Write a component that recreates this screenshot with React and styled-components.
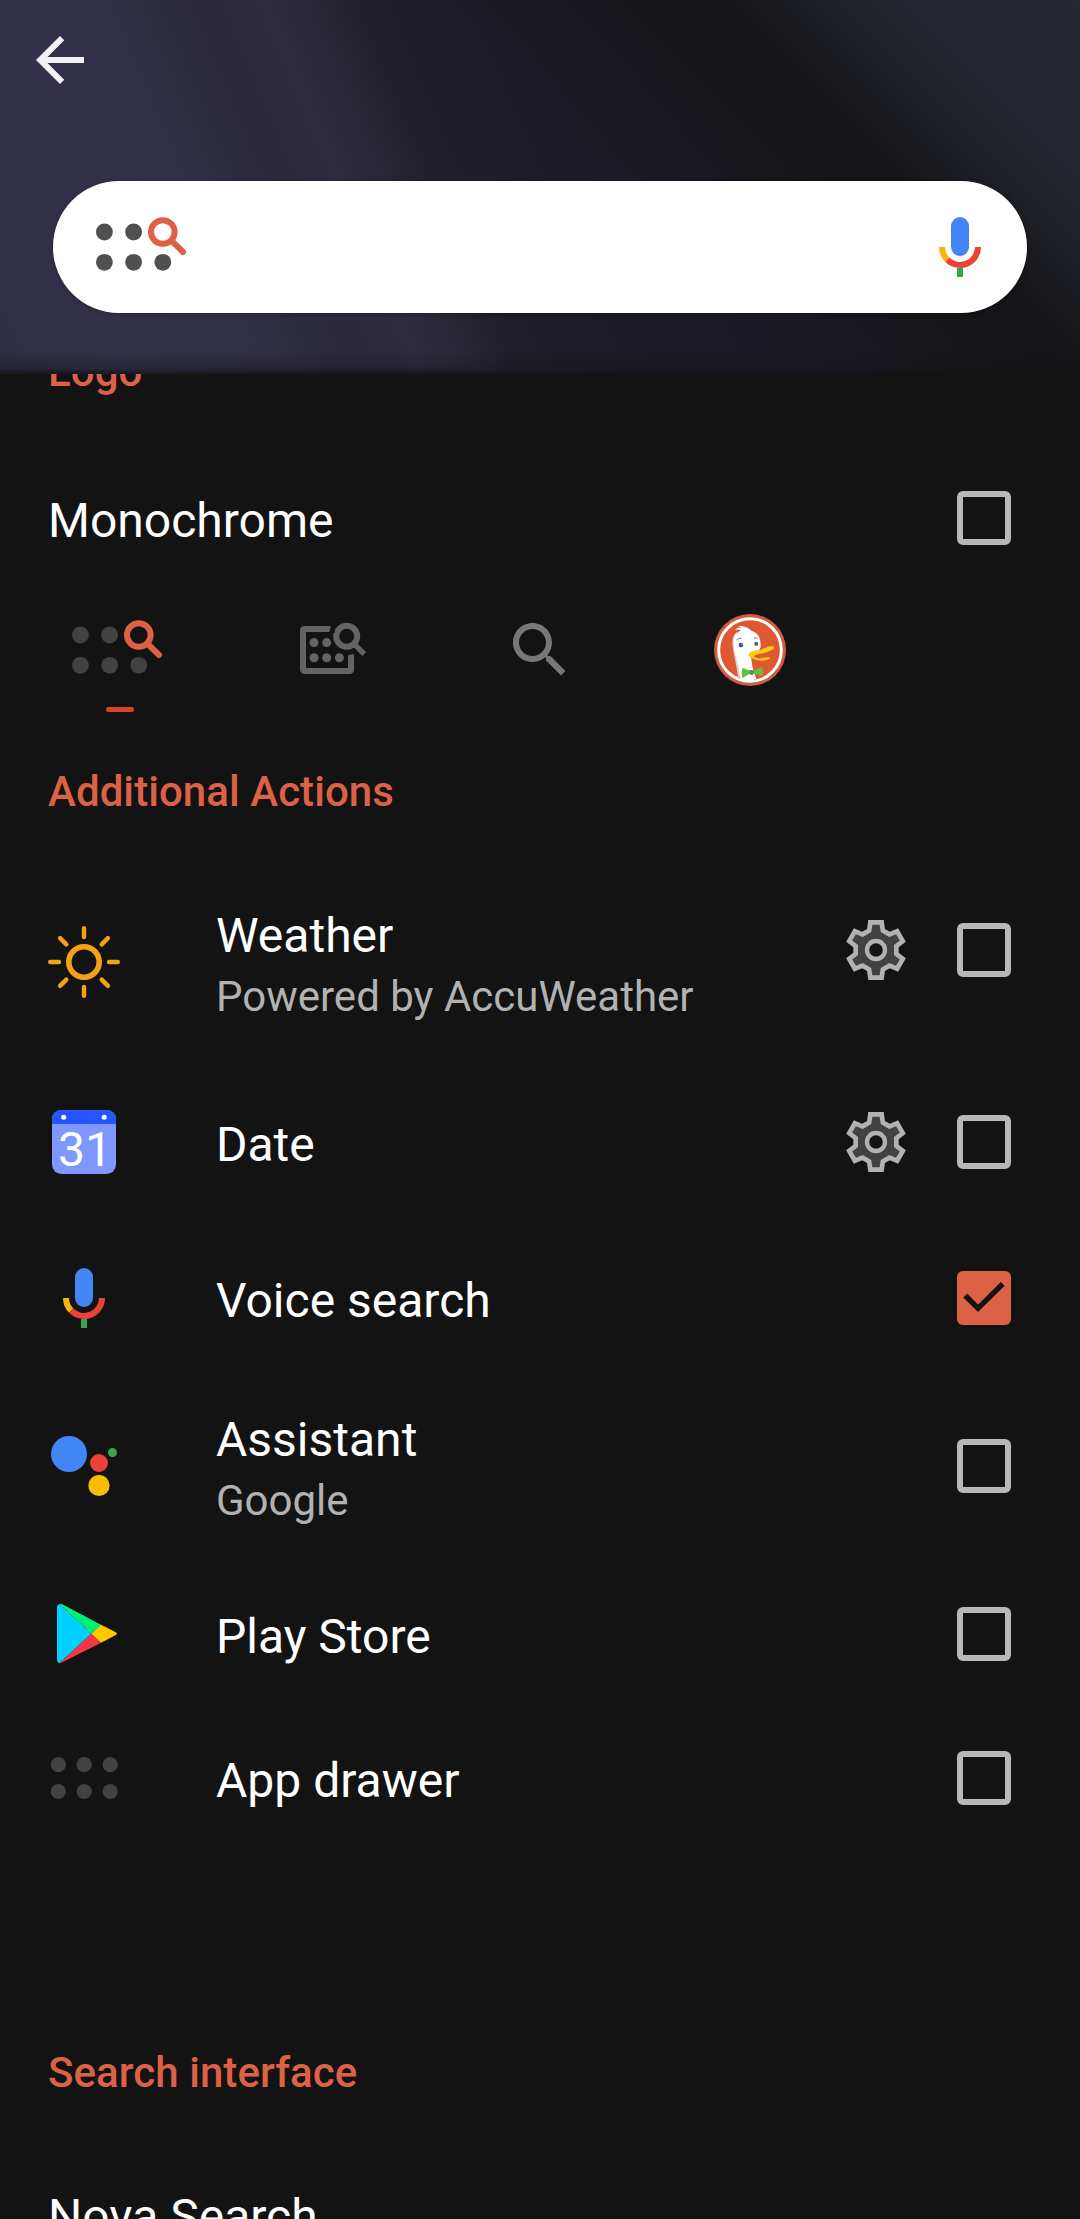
import React, { useState } from "react";
import styled, { createGlobalStyle } from "styled-components";

const GlobalStyle = createGlobalStyle`
  * {
    box-sizing: border-box;
  }

  body {
    margin: 0;
    background: #131313;
    font-family: Roboto, "Noto Sans", sans-serif;
  }
`;

const Screen = styled.div`
  display: flex;
  flex-direction: column;
  width: 1080px;
  height: 2219px;
  overflow: hidden;
  background: #131313;
`;

const Header = styled.header`
  flex: none;
  height: 374px;
  padding: 24px 53px 0;
  background: linear-gradient(
      to bottom,
      rgba(16, 16, 20, 0) 350px,
      rgba(16, 16, 20, 0.3) 368px,
      rgba(16, 16, 20, 0.75) 374px
    ),
    linear-gradient(
      45deg,
      rgba(20, 19, 22, 0) 580px,
      rgba(20, 19, 22, 0.9) 745px,
      #151518 775px,
      #1f2128 850px,
      #232630 920px,
      #242730 1028px
    ),
    linear-gradient(
      67deg,
      #2e2f46 0px,
      #333149 120px,
      #312f46 260px,
      #2c2a3d 305px,
      #2b293b 340px,
      #2e2c3e 390px,
      #292736 428px,
      #201e29 480px,
      #1d1b26 600px,
      #1a1922 800px,
      #17161b 1140px
    );
`;

const BackButton = styled.button`
  display: block;
  width: 72px;
  height: 72px;
  margin-left: -29px;
  padding: 0;
  border: 0;
  background: none;
`;

const SearchBar = styled.div`
  display: flex;
  align-items: center;
  justify-content: space-between;
  height: 132px;
  margin-top: 85px;
  padding: 0 31px 0 43px;
  border-radius: 66px;
  background: #fff;
  box-shadow: 0 1px 5px rgba(0, 0, 0, 0.3);
`;

const List = styled.main`
  flex: 1;
  min-height: 0;
  overflow: hidden;
`;

const Heading = styled.h2`
  height: 112px;
  margin: ${({ $offset }) => $offset || 0}px 0 0;
  padding: 37px 48px 0;
  color: #dd6245;
  font-size: 42px;
  font-weight: 500;
  line-height: 50px;
  letter-spacing: 0.06px;
`;

const Row = styled.div`
  display: flex;
  align-items: center;
  height: ${({ $height }) => $height}px;
  padding: ${({ $top }) => $top || 0}px 60px 0 48px;
`;

const RowMain = styled.div`
  display: flex;
  flex: 1;
  align-items: center;
  padding-top: ${({ $top }) => $top || 0}px;
`;

const IconFrame = styled.div`
  width: 168px;
  height: 72px;
`;

const Labels = styled.div`
  display: flex;
  flex-direction: column;
  gap: 8px;
  padding-top: 6px;
`;

const Title = styled.span`
  color: #fff;
  font-size: 48px;
  line-height: 56px;
  white-space: nowrap;
`;

const Summary = styled.span`
  color: #b2b2b2;
  font-size: 42px;
  line-height: 50px;
  white-space: nowrap;
`;

const Widgets = styled.div`
  display: flex;
  align-items: center;
  gap: 45px;
  padding-right: 9px;
`;

const Box = styled.button`
  display: block;
  width: 54px;
  height: 54px;
  padding: 0;
  border: ${({ $checked }) => ($checked ? "0" : "6px solid #b8b8b8")};
  border-radius: 6px;
  background: ${({ $checked }) => ($checked ? "#dd6245" : "transparent")};
`;

const Picker = styled.div`
  display: grid;
  grid-template-columns: repeat(4, 210px);
  height: 140px;
  padding: 24px 15px 0;
`;

const PickerItem = styled.div`
  display: flex;
  flex-direction: column;
  align-items: center;
  gap: 21px;
`;

const Indicator = styled.div`
  width: 28px;
  height: 5px;
  border-radius: 3px;
  background: #d64727;
`;

const Spacer = styled.div`
  height: 161px;
`;

const Svg = styled.svg`
  display: block;
  flex: none;
`;

const Icon = ({ width = 72, children }) => (
  <Svg width={width} height="72" viewBox={`0 0 ${width} 72`}>
    {children}
  </Svg>
);

const BackIcon = () => (
  <Icon>
    <path
      transform="scale(3)"
      fill="#f1f1f3"
      d="M20 11H7.83l5.59-5.59L12 4l-8 8 8 8 1.41-1.41L7.83 13H20v-2z"
    />
  </Icon>
);

const DotsSearchIcon = ({ color }) => (
  <Icon width={96}>
    <g fill={color}>
      <circle cx="8.4" cy="21" r="8.4" />
      <circle cx="37.6" cy="21" r="8.4" />
      <circle cx="8.4" cy="51.3" r="8.4" />
      <circle cx="37.6" cy="51.3" r="8.4" />
      <circle cx="66.8" cy="51.3" r="8.4" />
    </g>
    <g fill="none" stroke="#dd6245" strokeWidth="6">
      <circle cx="66.8" cy="21" r="11.8" />
      <path d="M75.5 29.7 87 41" strokeLinecap="round" />
    </g>
  </Icon>
);

const DrawerSearchIcon = () => (
  <Icon>
    <g fill="none" stroke="#646464" strokeWidth="6">
      <path d="M36.5 15H11q-2 0-2 2v38q0 2 2 2h44q2 0 2-2V39" />
      <circle cx="52.7" cy="22.3" r="10.5" />
      <path d="m60 29.8 10.3 10.2" strokeWidth="5.4" />
    </g>
    <path d="m37.8 11-3 8h6v-8z" fill="#131313" />
    <path d="m53.5 38.7 7-2v3l-7 1.8z" fill="#131313" />
    <g fill="#646464">
      <circle cx="20" cy="28.6" r="4.5" />
      <circle cx="32.7" cy="28.6" r="4.5" />
      <circle cx="20" cy="43.7" r="4.5" />
      <circle cx="32.7" cy="43.7" r="4.5" />
      <circle cx="45.4" cy="43.7" r="4.5" />
    </g>
  </Icon>
);

const SearchIcon = () => (
  <Icon>
    <path
      transform="scale(3)"
      fill="#777"
      d="M15.5 14h-.79l-.28-.27C15.41 12.59 16 11.11 16 9.5 16 5.91 13.09 3 9.5 3S3 5.91 3 9.5 5.91 16 9.5 16c1.61 0 3.09-.59 4.23-1.57l.27.28v.79l5 4.99L20.49 19l-4.99-5zm-6 0C7.01 14 5 11.99 5 9.5S7.01 5 9.5 5 14 7.01 14 9.5 11.99 14 9.5 14z"
    />
  </Icon>
);

const DuckIcon = () => (
  <Icon>
    <g transform="translate(-224 -24) scale(0.33333)">
      <circle cx="780" cy="180" r="108" fill="#cf5d42" />
      <circle cx="780" cy="180" r="94" fill="#de5833" stroke="#fff" strokeWidth="9" />
      <path
        fill="#d9cfcb"
        d="M744 266C740 215 727 188 727 156c0-14 5-24 14-30l20 142z"
      />
      <path
        fill="#fff"
        d="M752 271C747 222 731 190 731 156c0-20 9-30 22-34-6-4-13-4-19-2 6-8 14-8 21-6-4-4-9-6-14-6 18-1 34 3 44 15 18 4 27 20 27 42 0 12-5 17-14 19-16 5-21 12-14 22 1 22 8 42 15 60-16 7-34 8-47 5z"
      />
      <path
        fill="#ffcc14"
        d="M776 194c1-12 22-13 37-15 11-3 22-11 34-11 8 1 6 8-1 12-14 7-31 11-43 13-15 3-13 10 0 12 13 1 21-4 32-3 7 1 7 2 0 6-13 7-38 5-48-3-7-4-11-7-11-11z"
      />
      <path
        fill="#67bd47"
        d="m758 233 21 9h12l25-12c3 8 3 19 1 28l-25-7-8 5-6-4-21 12c-3-9-2-22 1-31z"
      />
      <path fill="#4aa239" d="M779 240h12v12l-7 3-6-4z" />
      <circle cx="753" cy="165" r="7" fill="#2d4f8e" />
      <circle cx="799" cy="161" r="6" fill="#2d4f8e" />
      <circle cx="756" cy="163" r="2" fill="#fff" />
      <circle cx="801" cy="159" r="1.8" fill="#fff" />
      <path
        fill="none"
        stroke="#6278a8"
        strokeWidth="3"
        d="M740 150q6-7 14-5M792 145q6-4 11 0"
      />
    </g>
  </Icon>
);

const SunIcon = () => (
  <Icon>
    <g fill="none" stroke="#f5a114">
      <circle cx="36" cy="36" r="15.2" strokeWidth="5.6" />
      {[0, 45, 90, 135, 180, 225, 270, 315].map((angle) => (
        <path
          key={angle}
          transform={`rotate(${angle} 36 36)`}
          d="M36 2.2v8.8"
          strokeWidth="4.4"
          strokeLinecap="round"
        />
      ))}
    </g>
  </Icon>
);

const CalendarIcon = () => (
  <Icon>
    <rect x="4" y="4" width="64" height="64" rx="9.5" fill="#7f98ff" />
    <path d="M4 18v-4.5Q4 4 13.5 4h45Q68 4 68 13.5V18z" fill="#2655ff" />
    <circle cx="15.7" cy="11.3" r="2.5" fill="#fff" />
    <circle cx="56.2" cy="11.3" r="2.5" fill="#fff" />
    <text
      x="37"
      y="60.2"
      textAnchor="middle"
      fontFamily="Roboto, sans-serif"
      fontSize="48"
      fill="#fff"
    >
      31
    </text>
  </Icon>
);

const MicIcon = () => (
  <Icon>
    <rect x="27" y="6" width="18" height="39" rx="9" fill="#4285f4" />
    <g fill="none" strokeWidth="6">
      <path d="M18 36a18 18 0 0 0 5.27 12.73" stroke="#f8b60a" />
      <path d="M23.27 48.73A18 18 0 0 0 54 36" stroke="#ea4335" />
    </g>
    <path d="M33 57h6v9h-6z" fill="#34a853" />
  </Icon>
);

const AssistantIcon = () => (
  <Icon>
    <circle cx="21" cy="24" r="18" fill="#4285f4" />
    <circle cx="51" cy="33" r="9" fill="#ea4335" />
    <circle cx="64.5" cy="22.5" r="4.5" fill="#34a853" />
    <circle cx="51" cy="55.5" r="10.6" fill="#fbbc05" />
  </Icon>
);

const PlayIcon = () => (
  <Icon>
    <g transform="translate(-18 -28) scale(0.33333)">
      <path fill="#00d0ff" d="M88 102q-7 3-7 10v157q0 8 7 11l96-89z" />
      <path fill="#00f076" d="M88 102q5-1 9 1l116 61-29 27z" />
      <path fill="#f93647" d="m88 280 96-89 29 27L97 277q-5 3-9 3z" />
      <path fill="#ffc900" d="m213 164 43 22q9 5 0 10l-43 22-29-27z" />
    </g>
  </Icon>
);

const DrawerIcon = () => (
  <Icon>
    <g fill="#424242">
      {[10.3, 36.2, 62.2].map((x) => (
        <React.Fragment key={x}>
          <circle cx={x} cy="22.7" r="7.6" />
          <circle cx={x} cy="49.5" r="7.6" />
        </React.Fragment>
      ))}
    </g>
  </Icon>
);

// one tooth, repeated every 60 degrees
const tooth = [
  [-20.6, -58.6],
  [-17, -83],
  [17, -83],
  [20.6, -58.6],
];
const gearPoints = [0, 1, 2, 3, 4, 5]
  .flatMap((i) => {
    const a = (i * Math.PI) / 3;
    return tooth.map(([x, y]) => [
      (x * Math.cos(a) - y * Math.sin(a)).toFixed(1),
      (x * Math.sin(a) + y * Math.cos(a)).toFixed(1),
    ]);
  })
  .join(" ");

const GearIcon = () => (
  <Icon>
    <g transform="translate(36 36) scale(0.33333)" stroke="#b2b2b2">
      <polygon points={gearPoints} fill="#424242" strokeWidth="14" />
      <circle r="27" fill="#131313" strokeWidth="13" />
    </g>
  </Icon>
);

const Checkbox = ({ checked, onClick }) => (
  <Box type="button" $checked={checked} onClick={onClick}>
    {checked && (
      <Svg width="54" height="54" viewBox="0 0 54 54">
        <path
          d="M8.2 24.5 21 37.3 45.8 12.8"
          fill="none"
          stroke="#131313"
          strokeWidth="5.4"
        />
      </Svg>
    )}
  </Box>
);

const actions = [
  { id: "weather", title: "Weather", summary: "Powered by AccuWeather", icon: <SunIcon />, height: 216, top: 24, settings: true },
  { id: "date", title: "Date", icon: <CalendarIcon />, height: 168, settings: true },
  { id: "voice", title: "Voice search", icon: <MicIcon />, height: 144 },
  { id: "assistant", title: "Assistant", summary: "Google", icon: <AssistantIcon />, height: 192 },
  { id: "play", title: "Play Store", icon: <PlayIcon />, height: 144 },
  { id: "drawer", title: "App drawer", icon: <DrawerIcon />, height: 144 },
];

const logos = [
  { id: "dots", icon: <DotsSearchIcon color="#424242" /> },
  { id: "drawer", icon: <DrawerSearchIcon /> },
  { id: "search", icon: <SearchIcon /> },
  { id: "duck", icon: <DuckIcon /> },
];

const App = () => {
  const [logo, setLogo] = useState("dots");
  const [checked, setChecked] = useState({ voice: true });

  const toggle = (id) => {
    setChecked({ ...checked, [id]: !checked[id] });
  };

  return (
    <>
      <GlobalStyle />
      <Screen>
        <Header>
          <BackButton type="button">
            <BackIcon />
          </BackButton>
          <SearchBar>
            <DotsSearchIcon color="#505050" />
            <MicIcon />
          </SearchBar>
        </Header>
        <List>
          {/* scrolled partly under the header */}
          <Heading $offset={-64}>Logo</Heading>
          <Row $height={168} $top={24}>
            <RowMain>
              <Labels>
                <Title>Monochrome</Title>
              </Labels>
            </RowMain>
            <Widgets>
              <Checkbox checked={checked.mono} onClick={() => toggle("mono")} />
            </Widgets>
          </Row>
          <Picker>
            {logos.map((item) => (
              <PickerItem key={item.id} onClick={() => setLogo(item.id)}>
                {item.icon}
                {logo === item.id && <Indicator />}
              </PickerItem>
            ))}
          </Picker>

          <Heading>Additional Actions</Heading>
          {actions.map((action) => (
            <Row key={action.id} $height={action.height}>
              <RowMain $top={action.top}>
                <IconFrame>{action.icon}</IconFrame>
                <Labels>
                  <Title>{action.title}</Title>
                  {action.summary && <Summary>{action.summary}</Summary>}
                </Labels>
              </RowMain>
              <Widgets>
                {action.settings && <GearIcon />}
                <Checkbox
                  checked={checked[action.id]}
                  onClick={() => toggle(action.id)}
                />
              </Widgets>
            </Row>
          ))}
          <Spacer />

          <Heading>Search interface</Heading>
          <Row $height={158} $top={24}>
            <Labels>
              <Title>Nova Search</Title>
            </Labels>
          </Row>
        </List>
      </Screen>
    </>
  );
};

export default App;
